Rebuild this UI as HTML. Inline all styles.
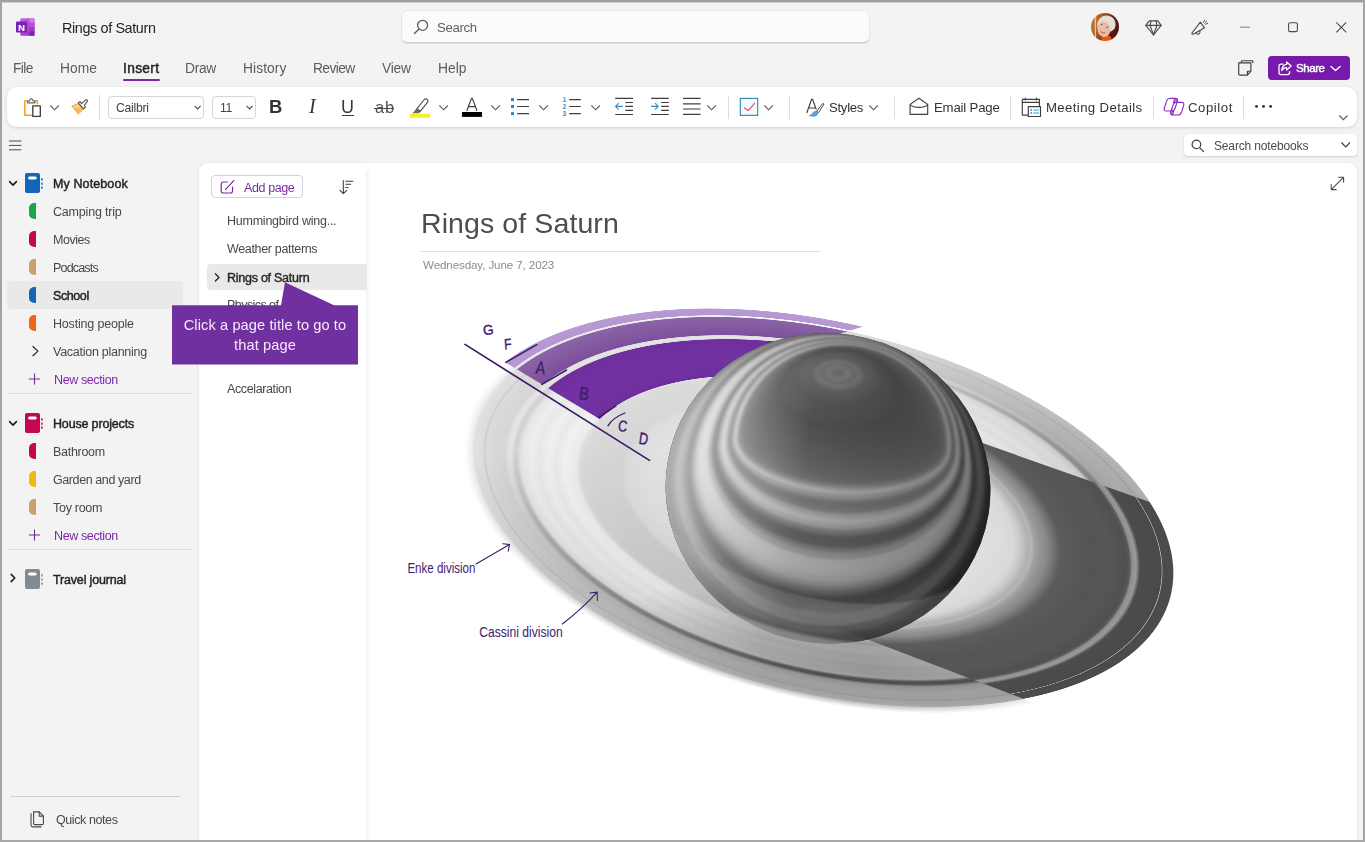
<!DOCTYPE html>
<html lang="en"><head><meta charset="utf-8"><title>Rings of Saturn - OneNote</title>
<style>
html,body{margin:0;padding:0;background:#f3f3f3;}
body{width:1365px;height:842px;overflow:hidden;font-family:"Liberation Sans",Arial,sans-serif;}
#app{position:relative;width:1365px;height:842px;background:#f3f3f3;overflow:hidden;}
.abs{position:absolute;}
.t{will-change:transform;position:absolute;white-space:pre;line-height:1;font-family:"Liberation Sans",Arial,sans-serif;}
.frame-t{z-index:50;left:0;top:0;width:1365px;height:2px;background:#9e9e9e;}
.frame-t2{z-index:50;left:0;top:2px;width:1365px;height:1px;background:#cfcfcf;}
.frame-l{z-index:50;left:0;top:0;width:2px;height:842px;background:#a3a3a3;}
.frame-r{z-index:50;left:1363px;top:0;width:2px;height:842px;background:#a3a3a3;}
.frame-b{z-index:50;left:0;top:840px;width:1365px;height:2px;background:#a8a8a8;}
.searchbox{left:402px;top:11px;width:467px;height:31px;background:#fbfbfb;border-radius:5px;box-shadow:0 0 0 1px rgba(0,0,0,.045),0 1.5px 1px rgba(0,0,0,.10);}
.tabline{left:123px;top:78.5px;width:36.6px;height:2.6px;background:#7a2aa8;border-radius:1.3px;}
.sharebtn{left:1268px;top:56px;width:82px;height:24px;background:#7719aa;border-radius:4px;}
.ribbon{left:7px;top:87px;width:1350px;height:40px;background:#fff;border-radius:9px;box-shadow:0 1px 3px rgba(0,0,0,.13),0 0 1px rgba(0,0,0,.10);}
.combo{background:#fff;border:1px solid #d6d6d6;border-radius:4px;box-sizing:border-box;}
.sep{width:1px;background:#dcdcdc;top:96px;height:23px;}
.nbsearch{left:1184px;top:134px;width:173px;height:22px;background:#fff;border-radius:4px;box-shadow:0 1px 2px rgba(0,0,0,.14),0 0 1px rgba(0,0,0,.10);}
.hl{background:#e9e9e9;border-radius:4px;}
.divider{height:1px;background:#dedede;}
.pagelist{left:199px;top:163px;width:168px;height:679px;background:#fff;border-radius:9px 0 0 0;box-shadow:-1px 0 3px rgba(0,0,0,.06);}
.content{left:367px;top:163px;width:990px;height:679px;background:#fff;border-radius:0 9px 0 0;box-shadow:1px 0 2px rgba(0,0,0,.03);}
.plshadow{left:366px;top:170px;width:5px;height:672px;background:linear-gradient(90deg,rgba(0,0,0,.05),rgba(0,0,0,0));}
.addbtn{left:211.4px;top:175.4px;width:91.2px;height:23px;border:1px solid #d8cfe0;border-radius:4px;box-sizing:border-box;background:#fff;}
.tab{width:6.6px;height:15.4px;border-radius:5.5px 0 0 5.5px / 5px 0 0 5px;}
svg{position:absolute;overflow:visible;}
.callout-text{will-change:transform;position:absolute;left:172px;top:315.6px;width:186px;text-align:center;color:#fbeaff;font-family:"Liberation Sans",Arial,sans-serif;font-size:14.6px;line-height:19.6px;letter-spacing:0.1px;white-space:pre;}

</style></head>
<body>
<div id="app">
<!-- window frame -->
<div class="abs frame-t"></div><div class="abs frame-t2"></div>
<div class="abs frame-l"></div><div class="abs frame-r"></div><div class="abs frame-b"></div>

<!-- title bar -->
<svg style="left:16px;top:18px" width="19" height="18" viewBox="0 0 19 18">
  <defs><linearGradient id="on1" x1="0" y1="0" x2="1" y2="1"><stop offset="0" stop-color="#c96ce0"/><stop offset="1" stop-color="#8a2bc0"/></linearGradient></defs>
  <rect x="4.2" y="0.2" width="14.3" height="17.6" rx="1.2" fill="url(#on1)"/>
  <rect x="13.6" y="0.2" width="4.9" height="4.6" fill="#d77be8"/>
  <rect x="13.6" y="4.8" width="4.9" height="4.3" fill="#b44fd6"/>
  <rect x="13.6" y="9.1" width="4.9" height="4.3" fill="#9a3cc6"/>
  <rect x="13.6" y="13.4" width="4.9" height="4.4" fill="#7f25b0"/>
  <rect x="0" y="3.6" width="11" height="11" rx="1.1" fill="#7a1fb3"/>
  <text x="5.5" y="12.6" text-anchor="middle" font-family="Liberation Sans, Arial, sans-serif" font-weight="700" font-size="9.6" fill="#fff">N</text>
</svg>
<div class="abs searchbox"></div>
<svg style="left:413px;top:19px" width="17" height="16" viewBox="0 0 17 16" fill="none" stroke="#5a5a5a" stroke-width="1.3" stroke-linecap="round">
  <circle cx="9.6" cy="6.3" r="5"/><path d="M6 10 L1.4 14.5"/>
</svg>
<!-- avatar -->
<svg style="left:1091px;top:13px" width="28" height="28" viewBox="0 0 28 28">
  <defs>
    <clipPath id="avc"><circle cx="14" cy="14" r="14"/></clipPath>
    <linearGradient id="avbg" x1="0" y1="0" x2="1" y2="0.25"><stop offset="0" stop-color="#c78a50"/><stop offset=".3" stop-color="#b8662e"/><stop offset=".62" stop-color="#8a3a20"/><stop offset=".8" stop-color="#5e1c16"/><stop offset="1" stop-color="#4e1612"/></linearGradient>
    <filter id="avb" x="-10%" y="-10%" width="120%" height="120%"><feGaussianBlur stdDeviation="0.55"/></filter>
  </defs>
  <g clip-path="url(#avc)"><g filter="url(#avb)">
    <rect x="-2" y="-2" width="32" height="32" fill="url(#avbg)"/>
    <path d="M3.6 0 L5.2 0 L5 28 L4 28 Z" fill="#f2c684"/>
    <path d="M16 22 L30 18 L30 30 L14 30 Z" fill="#5a1812"/>
    <path d="M11 23.4 Q15 21.4 19.6 23.2 L21 29 H10.5 Z" fill="#f0560f"/>
    <path d="M6.4 14 C5.6 6 11.4 2 16.2 2.6 C22.4 3 25.6 8.6 24.4 13.6 C23.8 16.4 21.6 18 19.8 18.4 L8 18 Z" fill="#e2ddd0"/>
    <ellipse cx="12.8" cy="16.4" rx="6.4" ry="7.6" transform="rotate(-14 12.8 16.4)" fill="#e9bba8"/>
    <path d="M6.6 13 C8 8.4 12.4 6.4 17 8.6 C19.6 10 20.6 13 20.2 17.6 C22.6 15.6 24.2 12 23 8.4 C21 3.4 15 1.8 10.6 4.4 C7.4 6.6 6 9.6 6.6 13 Z" fill="#e6e1d4"/>
    <path d="M9.6 18.6 Q11.6 20.6 14.2 19.6" stroke="#b4605a" stroke-width="1" fill="none"/>
    <circle cx="10.6" cy="11.4" r=".7" fill="#5a3a30"/><circle cx="16.2" cy="14.2" r=".7" fill="#5a3a30"/>
  </g></g>
</svg>
<!-- diamond -->
<svg style="left:1144.5px;top:19.5px" width="17" height="16" viewBox="0 0 17 16" fill="none" stroke="#4d4d4d" stroke-width="1.15" stroke-linejoin="round" stroke-linecap="round">
  <path d="M4.2 0.8 H12.8 L16.2 5.3 L8.5 15 L0.8 5.3 Z"/><path d="M0.8 5.3 H16.2"/><path d="M6 0.8 L5 5.3 L8.5 15 L12 5.3 L11 0.8"/>
</svg>
<!-- megaphone -->
<svg style="left:1190.5px;top:18.5px" width="18" height="17" viewBox="0 0 18 17" fill="none" stroke="#4d4d4d" stroke-width="1.15" stroke-linejoin="round" stroke-linecap="round">
  <path d="M9.3 3.2 L13.6 8.8 L2.2 15.2 Q0.6 15.6 1 14 Z"/>
  <path d="M5.2 13.5 Q6 16 8.4 14.8 Q9.6 13.6 8.7 11.6"/>
  <path d="M12.4 3.2 L13.5 1.4 M14.6 5.2 L16.6 4.4 M13.8 3.9 L15.6 2.2" stroke-width="1"/>
</svg>
<!-- window controls -->
<svg style="left:1240px;top:22px" width="110" height="12" viewBox="0 0 110 12" fill="none" stroke="#4a4a4a" stroke-width="1.1">
  <path d="M0 5.2 H10" stroke="#8a8a8a"/>
  <rect x="48.6" y="0.8" width="8.8" height="8.8" rx="1.4"/>
  <path d="M96.3 0.3 L106.3 10.3 M106.3 0.3 L96.3 10.3"/>
</svg>

<!-- menu row -->
<div class="abs tabline"></div>
<svg style="left:1237.5px;top:59.5px" width="16" height="16" viewBox="0 0 16 16" fill="none" stroke="#3d3d3d" stroke-width="1.15" stroke-linejoin="round">
  <path d="M3.4 0.7 H14.8 V3"/><path d="M3.4 0.7 V2.6"/>
  <path d="M0.7 2.9 H12.9 V11.2 L9.4 15.1 H2 Q0.7 15.1 0.7 13.8 Z"/>
  <path d="M12.9 11.2 H9.4 V15.1"/>
</svg>
<div class="abs sharebtn"></div>
<svg style="left:1277.5px;top:61px" width="64" height="15" viewBox="0 0 64 15" fill="none" stroke="#fff" stroke-width="1.3" stroke-linecap="round" stroke-linejoin="round">
  <path d="M5.2 3.1 H3 Q1 3.1 1 5.1 V11.6 Q1 13.6 3 13.6 H9.6 Q11.6 13.6 11.6 11.6 V10.6"/>
  <path d="M8.6 0.9 L13.2 5 L8.6 9.1 V6.7 Q5.2 6.6 3.8 9.6 Q4 4 8.6 3.4 Z"/>
  <path d="M53 5.4 L57.5 9.6 L62 5.4" stroke-width="1.4"/>
</svg>

<!-- ribbon -->
<div class="abs ribbon"></div>
<!-- paste -->
<svg style="left:23px;top:97px" width="20" height="21" viewBox="0 0 20 21" fill="none" stroke-linejoin="round">
  <path d="M9 18.2 H1.8 V3.8 H4.4 M12 3.8 H14.4 V7.6" stroke="#f0a332" stroke-width="1.5"/>
  <path d="M4.6 5.9 V3.9 H6.6 Q6.8 1.6 8.3 1.6 Q9.8 1.6 10 3.9 H12 V5.9 Z" stroke="#6b6b6b" stroke-width="1.1" fill="#fff"/>
  <rect x="9.8" y="8.8" width="7.5" height="10.6" stroke="#3a3a3a" stroke-width="1.3" fill="#fff"/>
</svg>
<svg style="left:50px;top:104.6px" width="10" height="6" viewBox="0 0 10 6" fill="none" stroke="#5a5a5a" stroke-width="1.1"><path d="M0.4 0.5 L4.6 4.8 L8.8 0.5"/></svg>
<!-- format painter -->
<svg style="left:71px;top:98.5px" width="18" height="16" viewBox="0 0 18 16" fill="none" stroke-linejoin="round">
  <path d="M0.8 7.1 L7.6 4.6 L11.9 10.6 L7.3 15.1 Z" fill="#fbd08a" stroke="#f0a332" stroke-width="1"/>
  <path d="M3 9.4 L10 8 L11.9 10.6 L7.3 15.1 Z" fill="#f6b95a" stroke="none"/>
  <path d="M7.2 3.9 L8.9 2.6 L10.6 4.6 L14.6 0.9 Q16 0.5 16.7 1.9 L13.3 6.3 L14.4 8 L12.6 9.9 Z" fill="#fff" stroke="#4f4f4f" stroke-width="1.1"/>
</svg>
<div class="abs sep" style="left:99px;top:95px;height:25px"></div>
<!-- font combos -->
<div class="abs combo" style="left:108px;top:95.6px;width:95.6px;height:23px"></div>
<svg style="left:194px;top:104.6px" width="8" height="6" viewBox="0 0 8 6" fill="none" stroke="#4a4a4a" stroke-width="1.1"><path d="M0.6 0.8 L3.6 3.9 L6.6 0.8"/></svg>
<div class="abs combo" style="left:212.4px;top:95.6px;width:43.4px;height:23px"></div>
<svg style="left:246px;top:104.6px" width="8" height="6" viewBox="0 0 8 6" fill="none" stroke="#4a4a4a" stroke-width="1.1"><path d="M0.6 0.8 L3.6 3.9 L6.6 0.8"/></svg>
<!-- underline for U, strike for ab -->
<div class="abs" style="left:342px;top:114.5px;width:12px;height:1.2px;background:#3a3a3a"></div>
<div class="abs" style="left:374.2px;top:107.9px;width:19.8px;height:1.1px;background:#4a4a4a"></div>
<!-- highlighter -->
<svg style="left:409px;top:97px" width="23" height="22" viewBox="0 0 23 22" fill="none" stroke-linejoin="round">
  <rect x="1" y="16.8" width="20" height="3.9" fill="#f2f21c" stroke="none"/>
  <path d="M8 11.6 L15.3 2.5 Q16.6 1.2 18.2 2.4 Q19.7 3.7 18.6 5.2 L11.3 14.3 Z" stroke="#4f4f4f" stroke-width="1.15" fill="#fff"/>
  <path d="M7.4 11.2 L11.8 14.8 L9.6 16.2 H3.2 L5.4 14.2 Z" fill="#6a6a6a" stroke="none"/>
</svg>
<svg style="left:438.6px;top:104.6px" width="10" height="6" viewBox="0 0 10 6" fill="none" stroke="#5a5a5a" stroke-width="1.1"><path d="M0.4 0.5 L4.6 4.8 L8.8 0.5"/></svg>
<!-- font color -->
<svg style="left:461px;top:97px" width="22" height="21" viewBox="0 0 22 21" fill="none">
  <rect x="1" y="15" width="20" height="4.9" fill="#000"/>
  <path d="M5.8 13.8 L10.5 1.4 H11.3 L16 13.8 M7.5 9.6 H14.3" stroke="#3a3a3a" stroke-width="1.15" stroke-linejoin="round"/>
</svg>
<svg style="left:490.6px;top:104.6px" width="10" height="6" viewBox="0 0 10 6" fill="none" stroke="#5a5a5a" stroke-width="1.1"><path d="M0.4 0.5 L4.6 4.8 L8.8 0.5"/></svg>
<!-- bullets -->
<svg style="left:510px;top:97px" width="21" height="19" viewBox="0 0 21 19" fill="none">
  <g fill="#2f86b4"><rect x="1" y="1.1" width="3" height="3"/><rect x="1" y="8" width="3" height="3"/><rect x="1" y="15.1" width="3" height="3"/></g>
  <path d="M7.1 2.6 H19 M7.1 9.5 H19 M7.1 16.6 H19" stroke="#3f3f3f" stroke-width="1.15"/>
</svg>
<svg style="left:538.6px;top:104.6px" width="10" height="6" viewBox="0 0 10 6" fill="none" stroke="#5a5a5a" stroke-width="1.1"><path d="M0.4 0.5 L4.6 4.8 L8.8 0.5"/></svg>
<!-- numbering -->
<svg style="left:561px;top:96px" width="21" height="21" viewBox="0 0 21 21" fill="none">
  <g font-family="Liberation Sans, Arial, sans-serif" font-size="6.6" fill="#3b93c4" font-weight="700"><text x="1.6" y="6">1</text><text x="1.6" y="13">2</text><text x="1.6" y="20">3</text></g>
  <path d="M8.2 3.6 H19.8 M8.2 10.5 H19.8 M8.2 17.6 H19.8" stroke="#3f3f3f" stroke-width="1.15"/>
</svg>
<svg style="left:590.6px;top:104.6px" width="10" height="6" viewBox="0 0 10 6" fill="none" stroke="#5a5a5a" stroke-width="1.1"><path d="M0.4 0.5 L4.6 4.8 L8.8 0.5"/></svg>
<!-- outdent -->
<svg style="left:614px;top:97px" width="20" height="19" viewBox="0 0 20 19" fill="none">
  <path d="M1.2 1.4 H19 M11.3 5.5 H19 M11.3 9.4 H19 M11.3 13.4 H19 M1.2 17.5 H19" stroke="#3f3f3f" stroke-width="1.15"/>
  <path d="M8.8 9.4 H1.8 M4.8 6.2 L1.6 9.4 L4.8 12.6" stroke="#2f8fc4" stroke-width="1.2" stroke-linejoin="round"/>
</svg>
<!-- indent -->
<svg style="left:650px;top:97px" width="20" height="19" viewBox="0 0 20 19" fill="none">
  <path d="M1.1 1.4 H18.8 M11.2 5.5 H18.8 M11.2 9.4 H18.8 M11.2 13.4 H18.8 M1.1 17.5 H18.8" stroke="#3f3f3f" stroke-width="1.15"/>
  <path d="M1 9.4 H8 M5 6.2 L8.2 9.4 L5 12.6" stroke="#2f8fc4" stroke-width="1.2" stroke-linejoin="round"/>
</svg>
<!-- align -->
<svg style="left:682px;top:97px" width="20" height="19" viewBox="0 0 20 19" fill="none">
  <path d="M1 1.4 H18.6 M1 6.9 H18.6 M1 12 H18.6 M1 17.4 H18.6" stroke="#3f3f3f" stroke-width="1.15"/>
</svg>
<svg style="left:706.6px;top:104.6px" width="10" height="6" viewBox="0 0 10 6" fill="none" stroke="#5a5a5a" stroke-width="1.1"><path d="M0.4 0.5 L4.6 4.8 L8.8 0.5"/></svg>
<div class="abs sep" style="left:728px"></div>
<!-- todo tag -->
<svg style="left:739px;top:97px" width="20" height="20" viewBox="0 0 20 20" fill="none">
  <rect x="1.3" y="1.4" width="17.4" height="17" fill="#f3fafd" stroke="#3a8fb7" stroke-width="1.2"/>
  <path d="M5.4 11 L9.3 13.5 L15.6 6.3" stroke="#e8505b" stroke-width="1.2" stroke-linejoin="round" stroke-linecap="round"/>
</svg>
<svg style="left:764px;top:104.6px" width="10" height="6" viewBox="0 0 10 6" fill="none" stroke="#5a5a5a" stroke-width="1.1"><path d="M0.4 0.5 L4.6 4.8 L8.8 0.5"/></svg>
<div class="abs sep" style="left:789px"></div>
<!-- styles -->
<svg style="left:805px;top:97px" width="21" height="21" viewBox="0 0 21 21" fill="none" stroke-linejoin="round">
  <path d="M1.8 16 L6.6 2.2 H7.6 L11.2 12.4 M3.6 11 H10.4" stroke="#3f3f3f" stroke-width="1.15"/>
  <path d="M11.6 14.2 L17.4 6.8 Q18.4 6 19 7 L13.6 15.6 Z" fill="#fff" stroke="#4f4f4f" stroke-width="1"/>
  <path d="M4.2 18.6 Q7 18 8.4 15.2 Q10.2 13.6 12 14.6 Q13.6 16.2 12 18 Q9.6 20.4 4.2 18.6 Z" fill="#5a9fd6" stroke="#3f86c4" stroke-width=".6"/>
</svg>
<svg style="left:868.6px;top:104.6px" width="10" height="6" viewBox="0 0 10 6" fill="none" stroke="#5a5a5a" stroke-width="1.1"><path d="M0.4 0.5 L4.6 4.8 L8.8 0.5"/></svg>
<div class="abs sep" style="left:894px"></div>
<!-- email -->
<svg style="left:909px;top:97px" width="20" height="19" viewBox="0 0 20 19" fill="none" stroke="#3f3f3f" stroke-width="1.15" stroke-linejoin="round">
  <path d="M1.1 7.4 L10 1.3 L18.7 7.4 V17.3 H1.1 Z"/>
  <path d="M1.1 7.6 Q4 10.4 10 10.4 Q16 10.4 18.7 7.6"/>
</svg>
<div class="abs sep" style="left:1010px"></div>
<!-- meeting details -->
<svg style="left:1021px;top:97px" width="21" height="21" viewBox="0 0 21 21" fill="none" stroke-linejoin="round">
  <path d="M7.4 18.1 H1.3 V2.4 H18.4 V9.6 M1.3 5.4 H18.4 M4.4 0.8 V3.4 M15.4 0.8 V3.4" stroke="#3f3f3f" stroke-width="1.15"/>
  <rect x="7.3" y="9.6" width="12.2" height="9.9" fill="#fff" stroke="#3f3f3f" stroke-width="1.15"/>
  <path d="M9.4 13 H11 M9.4 16 H11" stroke="#2f86b4" stroke-width="1.6"/>
  <path d="M12.2 13 H18 M12.2 16 H18" stroke="#3aa0d8" stroke-width="1.1"/>
</svg>
<div class="abs sep" style="left:1153px"></div>
<!-- copilot -->
<svg style="left:1163px;top:97px" width="22" height="20" viewBox="0 0 22 20" fill="none" stroke="#8a2fc0" stroke-width="1.15" stroke-linejoin="round">
  <path d="M6.6 1.3 H12.4 Q15.2 1.5 14.2 4.6 L12.2 11 Q11.2 13.9 8.4 14 H3 Q0.4 13.8 1.4 10.8 L3.6 4.2 Q4.4 1.5 6.6 1.3 Z"/>
  <path d="M13.4 5.3 H18.8 Q21.6 5.5 20.6 8.6 L18.6 15 Q17.6 17.9 14.8 18 H9.4 Q6.8 17.8 7.8 14.8 L10 8.2 Q10.8 5.5 13.4 5.3 Z"/>
  <path d="M10.6 5.6 L11.6 1.5 Q14.6 1.4 14.2 4.6 L13.9 5.4 Q11.6 5.2 10.6 5.6 Z M7.8 14 H10.6 L9.6 17.9 Q7 17.6 7.8 14 Z" fill="#c58be8"/>
</svg>
<div class="abs sep" style="left:1243px"></div>
<svg style="left:1254px;top:104px" width="20" height="5" viewBox="0 0 20 5"><g fill="#2f2f2f"><circle cx="2.5" cy="2.4" r="1.45"/><circle cx="9.5" cy="2.4" r="1.45"/><circle cx="16.6" cy="2.4" r="1.45"/></g></svg>
<svg style="left:1338.6px;top:114.6px" width="10" height="6" viewBox="0 0 10 6" fill="none" stroke="#5a5a5a" stroke-width="1.1"><path d="M0.4 0.5 L4.4 4.6 L8.4 0.5"/></svg>

<!-- row under ribbon -->
<svg style="left:9px;top:139.5px" width="13" height="11" viewBox="0 0 13 11" fill="none" stroke="#4a4a4a" stroke-width="1"><path d="M0 1 H12.4 M0 5.4 H12.4 M0 9.8 H12.4"/></svg>
<div class="abs nbsearch"></div>
<svg style="left:1190.5px;top:138.5px" width="14" height="14" viewBox="0 0 14 14" fill="none" stroke="#3f3f3f" stroke-width="1.2" stroke-linecap="round"><circle cx="5.4" cy="5.4" r="4.3"/><path d="M8.6 8.6 L12.6 12.6"/></svg>
<svg style="left:1340.6px;top:142.4px" width="10" height="6" viewBox="0 0 10 6" fill="none" stroke="#3f3f3f" stroke-width="1.15"><path d="M0.4 0.5 L4.7 4.9 L9 0.5"/></svg>

<!-- sidebar -->
<div class="abs hl" style="left:7px;top:281.4px;width:176px;height:27.4px"></div>
<!-- notebook: My Notebook -->
<svg style="left:8px;top:172px" width="36" height="22" viewBox="0 0 36 22" fill="none">
  <path d="M1.6 9.6 L5 13.1 L8.4 9.6" stroke="#1f1f1f" stroke-width="1.6" stroke-linecap="round" stroke-linejoin="round"/>
  <rect x="17" y="0.9" width="15" height="20" rx="1.9" fill="#1266b8"/>
  <rect x="20.1" y="4.4" width="8.6" height="3.2" rx="1.5" fill="#fff"/>
  <path d="M33.9 6.3 V8.5 M33.9 10.5 V12.7 M33.9 14.5 V16.7" stroke="#1266b8" stroke-width="1.5"/>
</svg>
<div class="abs tab" style="left:29.4px;top:203.3px;background:#13a84a"></div>
<div class="abs tab" style="left:29.4px;top:231.3px;background:#c2094f"></div>
<div class="abs tab" style="left:29.4px;top:259.3px;background:#c9a06e"></div>
<div class="abs tab" style="left:29.4px;top:287.3px;background:#1266b8"></div>
<div class="abs tab" style="left:29.4px;top:315.3px;background:#f0650f"></div>
<svg style="left:31px;top:345px" width="9" height="12" viewBox="0 0 9 12" fill="none" stroke="#2a2a2a" stroke-width="1.25" stroke-linecap="round" stroke-linejoin="round"><path d="M2 1.5 L6.9 6.1 L2 10.7"/></svg>
<svg style="left:28px;top:373px" width="13" height="12" viewBox="0 0 13 12" fill="none" stroke="#6b2fa0" stroke-width="1.1"><path d="M1 6 H12 M6.5 0.6 V11.4"/></svg>
<div class="abs divider" style="left:8px;top:393.4px;width:184px"></div>
<!-- notebook: House projects -->
<svg style="left:8px;top:412px" width="36" height="22" viewBox="0 0 36 22" fill="none">
  <path d="M1.6 9.6 L5 13.1 L8.4 9.6" stroke="#1f1f1f" stroke-width="1.6" stroke-linecap="round" stroke-linejoin="round"/>
  <rect x="17" y="0.9" width="15" height="20" rx="1.9" fill="#c2094f"/>
  <rect x="20.1" y="4.4" width="8.6" height="3.2" rx="1.5" fill="#fff"/>
  <path d="M33.9 6.3 V8.5 M33.9 10.5 V12.7 M33.9 14.5 V16.7" stroke="#c2094f" stroke-width="1.5"/>
</svg>
<div class="abs tab" style="left:29.4px;top:443.3px;background:#c2094f"></div>
<div class="abs tab" style="left:29.4px;top:471.3px;background:#f2b80f"></div>
<div class="abs tab" style="left:29.4px;top:499.3px;background:#c9a06e"></div>
<svg style="left:28px;top:529px" width="13" height="12" viewBox="0 0 13 12" fill="none" stroke="#6b2fa0" stroke-width="1.1"><path d="M1 6 H12 M6.5 0.6 V11.4"/></svg>
<div class="abs divider" style="left:8px;top:549px;width:184px"></div>
<!-- notebook: Travel journal -->
<svg style="left:8px;top:568px" width="36" height="22" viewBox="0 0 36 22" fill="none">
  <path d="M3.2 6.4 L6.8 10 L3.2 13.6" stroke="#1f1f1f" stroke-width="1.6" stroke-linecap="round" stroke-linejoin="round"/>
  <rect x="17" y="0.9" width="15" height="20" rx="1.9" fill="#7f8c92"/>
  <rect x="20.1" y="4.4" width="8.6" height="3.2" rx="1.5" fill="#fff"/>
  <path d="M33.9 6.3 V8.5 M33.9 10.5 V12.7 M33.9 14.5 V16.7" stroke="#7f8c92" stroke-width="1.5"/>
</svg>
<div class="abs divider" style="left:10px;top:796px;width:170px;background:#cfcfcf"></div>
<svg style="left:29.5px;top:810.5px" width="15" height="17" viewBox="0 0 15 17" fill="none" stroke="#4a4a4a" stroke-width="1.1" stroke-linejoin="round" stroke-linecap="round">
  <path d="M3.6 0.9 H9.2 L13.4 5.1 V12.4 Q13.4 13.6 12.2 13.6 H4.8 Q3.6 13.6 3.6 12.4 Z"/>
  <path d="M9.2 0.9 V5.1 H13.4"/>
  <path d="M1 2.6 V14 Q1 15.9 2.9 15.9 H11"/>
</svg>

<!-- page list & content panels -->
<div class="abs pagelist"></div>
<div class="abs content"></div>
<div class="abs plshadow"></div>
<div class="abs addbtn"></div>
<svg style="left:220px;top:179px" width="16" height="16" viewBox="0 0 16 16" fill="none" stroke="#7a2aa8" stroke-width="1.2" stroke-linecap="round" stroke-linejoin="round">
  <path d="M7.4 3 H3.4 Q1.2 3 1.2 5.2 V11.8 Q1.2 14 3.4 14 H10.4 Q12.6 14 12.6 11.8 V8"/>
  <path d="M5.6 10.4 L13.8 1.6"/>
</svg>
<svg style="left:338px;top:179px" width="17" height="16" viewBox="0 0 17 16" fill="none" stroke="#3a3a3a" stroke-width="1.05" stroke-linecap="round" stroke-linejoin="round">
  <path d="M5.3 1.4 V14.5 M2 11.3 L5.3 14.7 L8.8 11.3"/>
  <path d="M7.8 2.2 H14.8 M7.8 5.3 H12.8 M7.8 8.4 H10"/>
</svg>
<div class="abs hl" style="left:207px;top:264px;width:160px;height:25.6px;border-radius:4px 0 0 4px"></div>
<svg style="left:213px;top:272px" width="9" height="11" viewBox="0 0 9 11" fill="none" stroke="#2a2a2a" stroke-width="1.35" stroke-linecap="round" stroke-linejoin="round"><path d="M2.4 1.8 L6 5.4 L2.4 9"/></svg>
<!-- title underline -->
<div class="abs" style="left:421px;top:251px;width:400px;height:1px;background:#e2e2e2"></div>
<!-- expand -->
<svg style="left:1330px;top:176px" width="15" height="15" viewBox="0 0 15 15" fill="none" stroke="#4a4a4a" stroke-width="1.05" stroke-linecap="round" stroke-linejoin="round">
  <path d="M1.4 13.4 L13.4 1.4 M8.6 1.2 H13.6 V6.2 M1.2 8.6 V13.6 H6.2"/>
</svg>

<svg style="left:0;top:0" width="1365" height="842" viewBox="0 0 1365 842">
<defs>
<radialGradient id="rgL" gradientUnits="userSpaceOnUse" cx="0" cy="0" r="400.0" fx="-11.83" fy="-4.15"><stop offset="0.0000" stop-color="#e4e4e4" stop-opacity="1"/><stop offset="0.4325" stop-color="#e4e4e4" stop-opacity="1"/><stop offset="0.4913" stop-color="#dedede" stop-opacity="1"/><stop offset="0.5065" stop-color="#d8d8d8" stop-opacity="1"/><stop offset="0.5875" stop-color="#dadada" stop-opacity="1"/><stop offset="0.6115" stop-color="#dcdcdc" stop-opacity="1"/><stop offset="0.6250" stop-color="#ececec" stop-opacity="1"/><stop offset="0.6555" stop-color="#f1f1f1" stop-opacity="1"/><stop offset="0.6758" stop-color="#e9e9e9" stop-opacity="1"/><stop offset="0.6963" stop-color="#f0f0f0" stop-opacity="1"/><stop offset="0.7215" stop-color="#e8e8e8" stop-opacity="1"/><stop offset="0.7418" stop-color="#eeeeee" stop-opacity="1"/><stop offset="0.7672" stop-color="#e6e6e6" stop-opacity="1"/><stop offset="0.7797" stop-color="#d2d2d2" stop-opacity="1"/><stop offset="0.7875" stop-color="#d4d4d4" stop-opacity="1"/><stop offset="0.7925" stop-color="#e4e4e4" stop-opacity="1"/><stop offset="0.8028" stop-color="#e2e2e2" stop-opacity="1"/><stop offset="0.8103" stop-color="#d6d6d6" stop-opacity="1"/><stop offset="0.8462" stop-color="#d9d9d9" stop-opacity="1"/><stop offset="0.8592" stop-color="#dcdcdc" stop-opacity="1"/><stop offset="0.8625" stop-color="#d0d0d0" stop-opacity="1"/><stop offset="0.8655" stop-color="#d1d1d1" stop-opacity="1"/><stop offset="0.8685" stop-color="#dddddd" stop-opacity="1"/><stop offset="0.8800" stop-color="#dedede" stop-opacity="1"/><stop offset="0.8915" stop-color="#e0e0e0" stop-opacity="1"/><stop offset="0.8950" stop-color="#e0e0e0" stop-opacity="0"/></radialGradient>
<radialGradient id="rgC" gradientUnits="userSpaceOnUse" cx="0" cy="0" r="400.0" fx="-11.83" fy="-4.15"><stop offset="0.0000" stop-color="#000" stop-opacity="0"/><stop offset="0.7700" stop-color="#000" stop-opacity="0"/><stop offset="0.7812" stop-color="#000" stop-opacity="0.45"/><stop offset="0.7913" stop-color="#000" stop-opacity="0.6"/><stop offset="0.7987" stop-color="#000" stop-opacity="0.4"/><stop offset="0.8087" stop-color="#000" stop-opacity="0"/><stop offset="1.0000" stop-color="#000" stop-opacity="0"/></radialGradient>
<radialGradient id="rgH" gradientUnits="userSpaceOnUse" cx="0" cy="0" r="400.0" fx="-11.83" fy="-4.15"><stop offset="0.0000" stop-color="#dedede" stop-opacity="0"/><stop offset="0.8725" stop-color="#dedede" stop-opacity="0"/><stop offset="0.8800" stop-color="#dedede" stop-opacity="1"/><stop offset="0.8925" stop-color="#e2e2e2" stop-opacity="0.85"/><stop offset="0.9025" stop-color="#e8e8e8" stop-opacity="0.6"/><stop offset="0.9125" stop-color="#f0f0f0" stop-opacity="0.3"/><stop offset="0.9250" stop-color="#ffffff" stop-opacity="0"/></radialGradient>
<radialGradient id="rgHD" gradientUnits="userSpaceOnUse" cx="0" cy="0" r="400.0" fx="-11.83" fy="-4.15"><stop offset="0.0000" stop-color="#000" stop-opacity="0"/><stop offset="0.8725" stop-color="#000" stop-opacity="0"/><stop offset="0.8800" stop-color="#000" stop-opacity="0.25"/><stop offset="0.9000" stop-color="#000" stop-opacity="0.14"/><stop offset="0.9225" stop-color="#000" stop-opacity="0"/></radialGradient>
<radialGradient id="rgB" gradientUnits="userSpaceOnUse" cx="0" cy="0" r="400.0" fx="-11.83" fy="-4.15"><stop offset="0.0000" stop-color="#000" stop-opacity="0.05"/><stop offset="0.6000" stop-color="#000" stop-opacity="0.08"/><stop offset="0.6200" stop-color="#000" stop-opacity="0.3"/><stop offset="0.7500" stop-color="#000" stop-opacity="0.26"/><stop offset="0.7800" stop-color="#000" stop-opacity="0.15"/><stop offset="0.7950" stop-color="#000" stop-opacity="0"/><stop offset="1.0000" stop-color="#000" stop-opacity="0"/></radialGradient>
<radialGradient id="rgD" gradientUnits="userSpaceOnUse" cx="0" cy="0" r="400.0" fx="-11.83" fy="-4.15"><stop offset="0.0000" stop-color="#000" stop-opacity="0.1"/><stop offset="0.4913" stop-color="#000" stop-opacity="0.1"/><stop offset="0.5065" stop-color="#000" stop-opacity="0.16"/><stop offset="0.6075" stop-color="#000" stop-opacity="0.18"/><stop offset="0.6250" stop-color="#000" stop-opacity="0.08"/><stop offset="0.7318" stop-color="#000" stop-opacity="0.12"/><stop offset="0.7672" stop-color="#000" stop-opacity="0.16"/><stop offset="0.7797" stop-color="#000" stop-opacity="0.2"/><stop offset="0.7900" stop-color="#000" stop-opacity="0.1"/><stop offset="0.8003" stop-color="#000" stop-opacity="0.12"/><stop offset="0.8078" stop-color="#000" stop-opacity="0.3"/><stop offset="0.8335" stop-color="#000" stop-opacity="0.26"/><stop offset="0.8592" stop-color="#000" stop-opacity="0.28"/><stop offset="0.8915" stop-color="#000" stop-opacity="0.25"/><stop offset="0.8950" stop-color="#000" stop-opacity="0"/></radialGradient>
<radialGradient id="rgS" gradientUnits="userSpaceOnUse" cx="0" cy="0" r="400.0" fx="-11.83" fy="-4.15"><stop offset="0.0000" stop-color="#e0e0e0" stop-opacity="1"/><stop offset="0.4350" stop-color="#dedede" stop-opacity="1"/><stop offset="0.4650" stop-color="#dcdcdc" stop-opacity="1"/><stop offset="0.4950" stop-color="#d8d8d8" stop-opacity="1"/><stop offset="0.5100" stop-color="#cccccc" stop-opacity="1"/><stop offset="0.5225" stop-color="#bcbcbc" stop-opacity="1"/><stop offset="0.5325" stop-color="#b0b0b0" stop-opacity="1"/><stop offset="0.5400" stop-color="#b6b6b6" stop-opacity="1"/><stop offset="0.5500" stop-color="#a0a0a0" stop-opacity="1"/><stop offset="0.5675" stop-color="#909090" stop-opacity="1"/><stop offset="0.5775" stop-color="#8a8a8a" stop-opacity="1"/><stop offset="0.5900" stop-color="#7a7a7a" stop-opacity="1"/><stop offset="0.6050" stop-color="#666666" stop-opacity="1"/><stop offset="0.6135" stop-color="#5c5c5c" stop-opacity="1"/><stop offset="0.6505" stop-color="#585858" stop-opacity="1"/><stop offset="0.6935" stop-color="#545454" stop-opacity="1"/><stop offset="0.7318" stop-color="#575757" stop-opacity="1"/><stop offset="0.7772" stop-color="#505050" stop-opacity="1"/><stop offset="0.7850" stop-color="#5c5c5c" stop-opacity="1"/><stop offset="0.7900" stop-color="#8e8e8e" stop-opacity="1"/><stop offset="0.8003" stop-color="#9a9a9a" stop-opacity="1"/><stop offset="0.8065" stop-color="#6a6a6a" stop-opacity="1"/><stop offset="0.8103" stop-color="#4c4c4c" stop-opacity="1"/><stop offset="0.8592" stop-color="#4a4a4a" stop-opacity="1"/><stop offset="0.8630" stop-color="#4a4a4a" stop-opacity="1"/><stop offset="0.8647" stop-color="#b8b8b8" stop-opacity="1"/><stop offset="0.8668" stop-color="#4a4a4a" stop-opacity="1"/><stop offset="0.8915" stop-color="#4c4c4c" stop-opacity="1"/><stop offset="0.8940" stop-color="#ffffff" stop-opacity="1"/><stop offset="1.0000" stop-color="#ffffff" stop-opacity="1"/></radialGradient>
<radialGradient id="rgP" gradientUnits="userSpaceOnUse" cx="0" cy="0" r="400.0" fx="-11.83" fy="-4.15"><stop offset="0.0000" stop-color="#7030a0" stop-opacity="0"/><stop offset="0.6165" stop-color="#7030a0" stop-opacity="0"/><stop offset="0.6188" stop-color="#6c2c9a" stop-opacity="1"/><stop offset="0.6352" stop-color="#7030a0" stop-opacity="1"/><stop offset="0.7318" stop-color="#7232a2" stop-opacity="1"/><stop offset="0.7863" stop-color="#6e2e9c" stop-opacity="1"/><stop offset="0.7887" stop-color="#6e2e9c" stop-opacity="0"/><stop offset="0.8053" stop-color="#7c4f9e" stop-opacity="0"/><stop offset="0.8078" stop-color="#7c4f9e" stop-opacity="1"/><stop offset="0.8462" stop-color="#84599f" stop-opacity="1"/><stop offset="0.8900" stop-color="#8a63a8" stop-opacity="1"/><stop offset="0.8925" stop-color="#8a63a8" stop-opacity="0"/><stop offset="0.8982" stop-color="#b596d1" stop-opacity="0"/><stop offset="0.9003" stop-color="#b596d1" stop-opacity="1"/><stop offset="0.9297" stop-color="#b79bd3" stop-opacity="1"/><stop offset="0.9322" stop-color="#b79bd3" stop-opacity="0"/></radialGradient>
<linearGradient id="dmaskg" gradientUnits="userSpaceOnUse" x1="600" y1="430" x2="680" y2="760"><stop offset="0" stop-color="#000"/><stop offset="0.2" stop-color="#3a3a3a"/><stop offset="0.5" stop-color="#999"/><stop offset="0.85" stop-color="#fff"/></linearGradient>
<linearGradient id="dmaskg2" gradientUnits="userSpaceOnUse" x1="820" y1="0" x2="1120" y2="0"><stop offset="0" stop-color="#fff" stop-opacity="0"/><stop offset="1" stop-color="#fff" stop-opacity="0.5"/></linearGradient>
<radialGradient id="bmaskg"><stop offset="0" stop-color="#fff"/><stop offset="0.45" stop-color="#ccc"/><stop offset="0.8" stop-color="#444"/><stop offset="1" stop-color="#000"/></radialGradient>
<mask id="bmask" maskUnits="userSpaceOnUse" x="380" y="250" width="860" height="520"><ellipse cx="870" cy="668" rx="250" ry="60" transform="rotate(13.5 870 668)" fill="url(#bmaskg)"/></mask>
<linearGradient id="hmaskg" gradientUnits="userSpaceOnUse" x1="980" y1="420" x2="700" y2="640"><stop offset="0" stop-color="#000"/><stop offset="0.3" stop-color="#333"/><stop offset="0.7" stop-color="#fff"/></linearGradient>
<mask id="hmask" maskUnits="userSpaceOnUse" x="380" y="250" width="860" height="520"><rect x="380" y="250" width="860" height="520" fill="url(#hmaskg)"/></mask>
<mask id="dmask1" maskUnits="userSpaceOnUse" x="380" y="250" width="860" height="520"><rect x="380" y="250" width="860" height="520" fill="url(#dmaskg)"/></mask>
<mask id="dmask" maskUnits="userSpaceOnUse" x="380" y="250" width="860" height="520"><rect x="380" y="250" width="860" height="520" fill="url(#dmaskg)"/><rect x="380" y="250" width="860" height="520" fill="url(#dmaskg2)"/></mask>
<clipPath id="shclip"><path d="M900 414 L1215 525 L1215 780 L1066 715 L800 613.8 Z"/></clipPath>
<clipPath id="puclip"><path d="M470 341.2 L640 443.2 L830 450 L803.5 345 L903.5 314 L903.5 270 L470 270 Z"/></clipPath>
<clipPath id="frontclip"><path d="M560 447.6 L1080 572.4 L1080 760 L560 760 Z"/></clipPath>
<filter id="pblur" x="-5%" y="-5%" width="110%" height="110%"><feGaussianBlur stdDeviation="1.2"/></filter>
<filter id="rblur" x="-5%" y="-5%" width="110%" height="110%"><feGaussianBlur stdDeviation="0.55"/></filter>
<linearGradient id="plit" gradientUnits="userSpaceOnUse" x1="665.5" y1="455.4" x2="990.5" y2="521.4"><stop offset="0" stop-color="#000" stop-opacity="0"/><stop offset="0.06" stop-color="#000" stop-opacity="0.02"/><stop offset="0.25" stop-color="#000" stop-opacity="0.14"/><stop offset="0.5" stop-color="#000" stop-opacity="0.26"/><stop offset="0.75" stop-color="#000" stop-opacity="0.36"/><stop offset="1" stop-color="#000" stop-opacity="0.44"/></linearGradient>
<radialGradient id="plimb" gradientUnits="userSpaceOnUse" cx="808.0" cy="463.4" r="184.5"><stop offset="0" stop-color="#000" stop-opacity="0"/><stop offset="0.78" stop-color="#000" stop-opacity="0"/><stop offset="0.93" stop-color="#000" stop-opacity="0.10"/><stop offset="1" stop-color="#000" stop-opacity="0.24"/></radialGradient>
<linearGradient id="pwhite" gradientUnits="userSpaceOnUse" x1="665.5" y1="463.4" x2="990.5" y2="513.4"><stop offset="0" stop-color="#fff" stop-opacity="0.55"/><stop offset="0.08" stop-color="#fff" stop-opacity="0.45"/><stop offset="0.22" stop-color="#fff" stop-opacity="0.2"/><stop offset="0.42" stop-color="#fff" stop-opacity="0"/></linearGradient>
<clipPath id="pclip"><ellipse cx="828.0" cy="488.4" rx="162.5" ry="155.1" transform="rotate(9.0 828.0 488.4)"/></clipPath><clipPath id="pclip2"><ellipse cx="828.0" cy="488.4" rx="163.7" ry="156.29999999999998" transform="rotate(9.0 828.0 488.4)"/></clipPath>
<radialGradient id="rgM" gradientUnits="userSpaceOnUse" cx="0" cy="0" r="400.0" fx="-11.83" fy="-4.15"><stop offset="0.0000" stop-color="#000" stop-opacity="1"/><stop offset="0.4250" stop-color="#000" stop-opacity="1"/><stop offset="0.4400" stop-color="#2a2a2a" stop-opacity="1"/><stop offset="0.6035" stop-color="#383838" stop-opacity="1"/><stop offset="0.6200" stop-color="#a8a8a8" stop-opacity="1"/><stop offset="0.6683" stop-color="#c8c8c8" stop-opacity="1"/><stop offset="0.7318" stop-color="#fff" stop-opacity="1"/><stop offset="0.9862" stop-color="#fff" stop-opacity="1"/></radialGradient><mask id="fmask" maskUnits="userSpaceOnUse" x="380" y="250" width="860" height="520"><g clip-path="url(#frontclip)"><g transform="translate(824.72 512.29) rotate(13.5) scale(1 0.5079)"><circle cx="0" cy="0" r="400.0" fill="url(#rgM)" /></g></g></mask></defs>
<g id="rs">
<g filter="url(#rblur)">
<g mask="url(#hmask)"><g transform="translate(824.72 512.29) rotate(13.5) scale(1 0.5079)"><circle cx="0" cy="0" r="400.0" fill="url(#rgH)" /></g><g mask="url(#dmask)"><g transform="translate(824.72 512.29) rotate(13.5) scale(1 0.5079)"><circle cx="0" cy="0" r="400.0" fill="url(#rgHD)" /></g></g></g>
<g transform="translate(824.72 512.29) rotate(13.5) scale(1 0.5079)"><circle cx="0" cy="0" r="400.0" fill="url(#rgL)" /></g>
<g mask="url(#dmask)"><g transform="translate(824.72 512.29) rotate(13.5) scale(1 0.5079)"><circle cx="0" cy="0" r="400.0" fill="url(#rgD)" /></g></g>
<g mask="url(#dmask1)"><g transform="translate(824.72 512.29) rotate(13.5) scale(1 0.5079)"><circle cx="0" cy="0" r="400.0" fill="url(#rgC)" /></g></g>
<g mask="url(#bmask)"><g transform="translate(824.72 512.29) rotate(13.5) scale(1 0.5079)"><circle cx="0" cy="0" r="400.0" fill="url(#rgB)" /></g></g>
</g>
<g clip-path="url(#shclip)"><g transform="translate(824.72 512.29) rotate(13.5) scale(1 0.5079)"><circle cx="0" cy="0" r="400.0" fill="url(#rgS)" /></g></g>
</g>
<g clip-path="url(#puclip)"><g transform="translate(824.72 512.29) rotate(13.5) scale(1 0.5079)"><circle cx="0" cy="0" r="400.0" fill="url(#rgP)" /></g></g>
<g clip-path="url(#pclip)"><rect x="655.5" y="315.9" width="345.0" height="345.0" fill="#484848"/><g filter="url(#pblur)"><path transform="rotate(3.4 828.0 490.0)" d="M650.0 490.0A178.0 172.0 0 0 1 1006.0 490.0A178.0 172.0 0 0 1 650.0 490.0Z" fill="#494949"/><path transform="rotate(3.4 828.0 489.7)" d="M652.0 489.7A176.0 170.0 0 0 1 1004.0 489.7A176.0 169.9 0 0 1 652.0 489.7Z" fill="#4a4a4a"/><path transform="rotate(3.4 828.0 489.3)" d="M653.9 489.3A174.1 167.9 0 0 1 1002.1 489.3A174.1 167.8 0 0 1 653.9 489.3Z" fill="#4b4b4b"/><path transform="rotate(3.4 828.0 489.0)" d="M655.9 489.0A172.1 165.9 0 0 1 1000.1 489.0A172.1 165.7 0 0 1 655.9 489.0Z" fill="#4b4b4b"/><path transform="rotate(3.4 828.0 488.7)" d="M657.9 488.7A170.1 163.8 0 0 1 998.1 488.7A170.1 163.6 0 0 1 657.9 488.7Z" fill="#4c4c4c"/><path transform="rotate(3.4 828.0 488.4)" d="M659.9 488.4A168.1 161.8 0 0 1 996.1 488.4A168.1 161.5 0 0 1 659.9 488.4Z" fill="#4d4d4d"/><path transform="rotate(3.4 828.0 488.0)" d="M661.8 488.0A166.2 159.8 0 0 1 994.2 488.0A166.2 159.4 0 0 1 661.8 488.0Z" fill="#4e4e4e"/><path transform="rotate(3.4 828.0 487.7)" d="M663.8 487.7A164.2 157.7 0 0 1 992.2 487.7A164.2 157.3 0 0 1 663.8 487.7Z" fill="#4e4e4e"/><path transform="rotate(3.4 828.1 487.1)" d="M665.6 487.1A162.4 156.0 0 0 1 990.5 487.1A162.4 155.4 0 0 1 665.6 487.1Z" fill="#4f4f4f"/><path transform="rotate(3.4 828.3 486.2)" d="M667.2 486.2A161.1 154.9 0 0 1 989.4 486.2A161.1 153.9 0 0 1 667.2 486.2Z" fill="#505050"/><path transform="rotate(3.4 828.5 485.2)" d="M668.8 485.2A159.7 153.7 0 0 1 988.2 485.2A159.7 152.4 0 0 1 668.8 485.2Z" fill="#515151"/><path transform="rotate(3.4 828.7 484.3)" d="M670.4 484.3A158.3 152.6 0 0 1 987.0 484.3A158.3 150.9 0 0 1 670.4 484.3Z" fill="#595959"/><path transform="rotate(3.4 828.9 483.4)" d="M672.0 483.4A156.9 151.4 0 0 1 985.8 483.4A156.9 149.4 0 0 1 672.0 483.4Z" fill="#676767"/><path transform="rotate(3.4 829.1 482.4)" d="M673.6 482.4A155.6 150.3 0 0 1 984.7 482.4A155.6 147.9 0 0 1 673.6 482.4Z" fill="#747474"/><path transform="rotate(3.4 829.3 481.5)" d="M675.2 481.5A154.2 149.1 0 0 1 983.5 481.5A154.2 146.3 0 0 1 675.2 481.5Z" fill="#838383"/><path transform="rotate(3.4 829.5 480.5)" d="M676.7 480.5A152.8 148.0 0 0 1 982.3 480.5A152.8 144.8 0 0 1 676.7 480.5Z" fill="#8f8f8f"/><path transform="rotate(3.4 829.7 479.6)" d="M678.3 479.6A151.4 146.8 0 0 1 981.2 479.6A151.4 143.3 0 0 1 678.3 479.6Z" fill="#8b8b8b"/><path transform="rotate(3.4 829.9 478.7)" d="M679.9 478.7A150.0 145.6 0 0 1 980.0 478.7A150.0 141.8 0 0 1 679.9 478.7Z" fill="#888888"/><path transform="rotate(3.4 830.2 477.7)" d="M681.5 477.7A148.7 144.5 0 0 1 978.8 477.7A148.7 140.3 0 0 1 681.5 477.7Z" fill="#808080"/><path transform="rotate(3.4 830.4 476.8)" d="M683.1 476.8A147.3 143.3 0 0 1 977.6 476.8A147.3 138.8 0 0 1 683.1 476.8Z" fill="#777777"/><path transform="rotate(3.4 830.6 476.2)" d="M684.2 476.2A146.3 142.5 0 0 1 976.9 476.2A146.3 136.7 0 0 1 684.2 476.2Z" fill="#6f6f6f"/><path transform="rotate(3.4 830.7 475.6)" d="M685.3 475.6A145.4 141.8 0 0 1 976.2 475.6A145.4 134.6 0 0 1 685.3 475.6Z" fill="#696969"/><path transform="rotate(3.4 830.9 475.0)" d="M686.4 475.0A144.6 141.1 0 0 1 975.5 475.0A144.6 132.4 0 0 1 686.4 475.0Z" fill="#646464"/><path transform="rotate(3.4 831.1 474.5)" d="M687.4 474.5A143.7 140.3 0 0 1 974.9 474.5A143.7 130.2 0 0 1 687.4 474.5Z" fill="#616161"/><path transform="rotate(3.4 831.3 473.9)" d="M688.5 473.9A142.9 139.6 0 0 1 974.2 473.9A142.9 128.0 0 0 1 688.5 473.9Z" fill="#5f5f5f"/><path transform="rotate(3.4 831.5 473.4)" d="M689.5 473.4A142.0 138.9 0 0 1 973.5 473.4A142.0 125.8 0 0 1 689.5 473.4Z" fill="#626262"/><path transform="rotate(3.4 831.7 472.8)" d="M690.6 472.8A141.1 138.2 0 0 1 972.8 472.8A141.1 123.6 0 0 1 690.6 472.8Z" fill="#727272"/><path transform="rotate(3.4 831.9 472.3)" d="M691.6 472.3A140.3 137.4 0 0 1 972.2 472.3A140.3 121.4 0 0 1 691.6 472.3Z" fill="#818181"/><path transform="rotate(3.4 832.1 471.7)" d="M692.7 471.7A139.4 136.7 0 0 1 971.5 471.7A139.4 119.2 0 0 1 692.7 471.7Z" fill="#929292"/><path transform="rotate(3.4 832.5 470.7)" d="M693.9 470.7A138.6 135.5 0 0 1 971.1 470.7A138.6 117.8 0 0 1 693.9 470.7Z" fill="#a3a3a3"/><path transform="rotate(3.4 832.8 469.6)" d="M695.0 469.6A137.8 134.4 0 0 1 970.6 469.6A137.8 116.4 0 0 1 695.0 469.6Z" fill="#b2b2b2"/><path transform="rotate(3.4 833.2 468.6)" d="M696.2 468.6A137.0 133.2 0 0 1 970.2 468.6A137.0 114.9 0 0 1 696.2 468.6Z" fill="#bfbfbf"/><path transform="rotate(3.4 833.6 467.6)" d="M697.4 467.6A136.2 132.0 0 0 1 969.8 467.6A136.2 113.5 0 0 1 697.4 467.6Z" fill="#cbcbcb"/><path transform="rotate(3.4 833.9 466.5)" d="M698.6 466.5A135.4 130.9 0 0 1 969.3 466.5A135.4 112.1 0 0 1 698.6 466.5Z" fill="#d2d2d2"/><path transform="rotate(3.4 834.3 465.5)" d="M699.7 465.5A134.6 129.7 0 0 1 968.9 465.5A134.6 110.7 0 0 1 699.7 465.5Z" fill="#d4d4d4"/><path transform="rotate(3.4 834.7 464.5)" d="M700.9 464.5A133.8 128.5 0 0 1 968.5 464.5A133.8 109.3 0 0 1 700.9 464.5Z" fill="#d6d6d6"/><path transform="rotate(3.4 835.0 463.4)" d="M702.1 463.4A133.0 127.4 0 0 1 968.0 463.4A133.0 107.8 0 0 1 702.1 463.4Z" fill="#d9d9d9"/><path transform="rotate(3.4 835.4 462.4)" d="M703.2 462.4A132.2 126.2 0 0 1 967.6 462.4A132.2 106.4 0 0 1 703.2 462.4Z" fill="#dadada"/><path transform="rotate(3.4 835.8 461.4)" d="M704.4 461.4A131.4 125.1 0 0 1 967.2 461.4A131.4 105.0 0 0 1 704.4 461.4Z" fill="#d8d8d8"/><path transform="rotate(3.4 836.2 460.3)" d="M705.6 460.3A130.6 123.9 0 0 1 966.7 460.3A130.6 103.6 0 0 1 705.6 460.3Z" fill="#d3d3d3"/><path transform="rotate(3.4 836.5 459.3)" d="M706.8 459.3A129.8 122.7 0 0 1 966.3 459.3A129.8 102.1 0 0 1 706.8 459.3Z" fill="#c5c5c5"/><path transform="rotate(3.4 836.9 458.3)" d="M707.9 458.3A129.0 121.6 0 0 1 965.9 458.3A129.0 100.7 0 0 1 707.9 458.3Z" fill="#b8b8b8"/><path transform="rotate(3.4 837.3 457.2)" d="M709.1 457.2A128.2 120.4 0 0 1 965.4 457.2A128.2 99.3 0 0 1 709.1 457.2Z" fill="#a7a7a7"/><path transform="rotate(3.4 837.6 456.2)" d="M710.3 456.2A127.4 119.2 0 0 1 965.0 456.2A127.4 97.9 0 0 1 710.3 456.2Z" fill="#959595"/><path transform="rotate(3.4 837.9 455.5)" d="M711.2 455.5A126.7 118.3 0 0 1 964.5 455.5A126.7 96.1 0 0 1 711.2 455.5Z" fill="#878787"/><path transform="rotate(3.4 838.1 454.9)" d="M712.1 454.9A126.0 117.5 0 0 1 964.0 454.9A126.0 94.3 0 0 1 712.1 454.9Z" fill="#7a7a7a"/><path transform="rotate(3.4 838.3 454.4)" d="M713.0 454.4A125.3 116.7 0 0 1 963.6 454.4A125.3 92.4 0 0 1 713.0 454.4Z" fill="#767676"/><path transform="rotate(3.4 838.5 453.8)" d="M713.9 453.8A124.6 115.8 0 0 1 963.1 453.8A124.6 90.6 0 0 1 713.9 453.8Z" fill="#767676"/><path transform="rotate(3.4 838.7 453.2)" d="M714.8 453.2A123.9 115.0 0 0 1 962.6 453.2A123.9 88.7 0 0 1 714.8 453.2Z" fill="#757575"/><path transform="rotate(3.4 838.9 452.6)" d="M715.7 452.6A123.2 114.1 0 0 1 962.1 452.6A123.2 86.9 0 0 1 715.7 452.6Z" fill="#747474"/><path transform="rotate(3.4 839.1 452.1)" d="M716.4 452.1A122.7 113.5 0 0 1 961.8 452.1A122.7 85.4 0 0 1 716.4 452.1Z" fill="#7d7d7d"/><path transform="rotate(3.4 839.3 451.7)" d="M717.2 451.7A122.1 112.8 0 0 1 961.4 451.7A122.1 83.9 0 0 1 717.2 451.7Z" fill="#8a8a8a"/><path transform="rotate(3.4 839.4 451.2)" d="M717.9 451.2A121.5 112.1 0 0 1 961.0 451.2A121.5 82.4 0 0 1 717.9 451.2Z" fill="#9b9b9b"/><path transform="rotate(3.4 839.6 450.7)" d="M718.9 450.7A120.8 111.4 0 0 1 960.4 450.7A120.8 80.9 0 0 1 718.9 450.7Z" fill="#afafaf"/><path transform="rotate(3.4 839.8 450.2)" d="M719.8 450.2A120.0 110.7 0 0 1 959.8 450.2A120.0 79.4 0 0 1 719.8 450.2Z" fill="#c0c0c0"/><path transform="rotate(3.4 840.0 449.7)" d="M720.7 449.7A119.3 110.1 0 0 1 959.3 449.7A119.3 77.9 0 0 1 720.7 449.7Z" fill="#cacaca"/><path transform="rotate(3.4 840.2 449.2)" d="M721.6 449.2A118.6 109.4 0 0 1 958.7 449.2A118.6 76.4 0 0 1 721.6 449.2Z" fill="#d4d4d4"/><path transform="rotate(3.4 840.3 448.7)" d="M722.5 448.7A117.8 108.7 0 0 1 958.2 448.7A117.8 74.9 0 0 1 722.5 448.7Z" fill="#dedede"/><path transform="rotate(3.4 840.5 448.2)" d="M723.4 448.2A117.1 108.0 0 0 1 957.6 448.2A117.1 73.4 0 0 1 723.4 448.2Z" fill="#dbdbdb"/><path transform="rotate(3.4 840.7 447.7)" d="M724.4 447.7A116.3 107.3 0 0 1 957.0 447.7A116.3 71.9 0 0 1 724.4 447.7Z" fill="#d4d4d4"/><path transform="rotate(3.4 840.9 447.3)" d="M725.3 447.3A115.6 106.6 0 0 1 956.5 447.3A115.6 70.4 0 0 1 725.3 447.3Z" fill="#c5c5c5"/><path transform="rotate(3.4 841.1 446.8)" d="M726.2 446.8A114.9 105.9 0 0 1 955.9 446.8A114.9 68.9 0 0 1 726.2 446.8Z" fill="#b3b3b3"/><path transform="rotate(3.4 841.2 446.3)" d="M727.1 446.3A114.1 105.3 0 0 1 955.4 446.3A114.1 67.4 0 0 1 727.1 446.3Z" fill="#a3a3a3"/><path transform="rotate(3.4 841.3 446.1)" d="M727.8 446.1A113.5 104.7 0 0 1 954.8 446.1A113.5 65.6 0 0 1 727.8 446.1Z" fill="#9c9c9c"/><path transform="rotate(3.4 841.4 445.8)" d="M728.6 445.8A112.8 104.1 0 0 1 954.2 445.8A112.8 63.8 0 0 1 728.6 445.8Z" fill="#959595"/><path transform="rotate(3.4 841.5 445.5)" d="M729.3 445.5A112.2 103.6 0 0 1 953.6 445.5A112.2 62.1 0 0 1 729.3 445.5Z" fill="#8e8e8e"/><path transform="rotate(3.4 841.6 445.2)" d="M730.1 445.2A111.5 103.0 0 0 1 953.1 445.2A111.5 60.3 0 0 1 730.1 445.2Z" fill="#919191"/><path transform="rotate(3.4 841.6 445.0)" d="M730.8 445.0A110.8 102.5 0 0 1 952.5 445.0A110.8 58.6 0 0 1 730.8 445.0Z" fill="#969696"/><path transform="rotate(3.4 841.7 444.7)" d="M731.5 444.7A110.2 101.9 0 0 1 951.9 444.7A110.2 56.8 0 0 1 731.5 444.7Z" fill="#a4a4a4"/><path transform="rotate(3.4 841.8 444.5)" d="M732.3 444.5A109.5 101.4 0 0 1 951.3 444.5A109.5 55.0 0 0 1 732.3 444.5Z" fill="#b4b4b4"/><path transform="rotate(3.4 841.9 444.3)" d="M733.2 444.3A108.7 100.9 0 0 1 950.6 444.3A108.7 53.2 0 0 1 733.2 444.3Z" fill="#c3c3c3"/><path transform="rotate(3.4 842.0 444.1)" d="M734.0 444.1A108.0 100.4 0 0 1 949.9 444.1A108.0 51.5 0 0 1 734.0 444.1Z" fill="#d1d1d1"/><path transform="rotate(3.4 842.0 443.9)" d="M734.8 443.9A107.2 99.9 0 0 1 949.2 443.9A107.2 49.6 0 0 1 734.8 443.9Z" fill="#e0e0e0"/><path transform="rotate(3.4 842.1 443.7)" d="M735.7 443.7A106.4 99.4 0 0 1 948.6 443.7A106.4 47.8 0 0 1 735.7 443.7Z" fill="#d2d2d2"/><path transform="rotate(3.4 842.2 443.5)" d="M736.5 443.5A105.7 98.9 0 0 1 947.9 443.5A105.7 46.0 0 0 1 736.5 443.5Z" fill="#bbbbbb"/><path transform="rotate(3.4 842.3 443.3)" d="M737.4 443.3A104.9 98.4 0 0 1 947.2 443.3A104.9 44.2 0 0 1 737.4 443.3Z" fill="#a9a9a9"/><path transform="rotate(3.4 842.2 442.1)" d="M738.6 442.1A103.6 97.0 0 0 1 945.8 442.1A103.6 43.5 0 0 1 738.6 442.1Z" fill="#999999"/><path transform="rotate(3.4 842.1 440.6)" d="M740.0 440.6A102.1 95.3 0 0 1 944.2 440.6A102.1 43.0 0 0 1 740.0 440.6Z" fill="#8c8c8c"/><path transform="rotate(3.4 842.1 439.0)" d="M741.4 439.0A100.6 93.6 0 0 1 942.7 439.0A100.6 42.5 0 0 1 741.4 439.0Z" fill="#898989"/><path transform="rotate(3.4 842.0 437.5)" d="M742.9 437.5A99.1 91.9 0 0 1 941.1 437.5A99.1 42.1 0 0 1 742.9 437.5Z" fill="#868686"/><path transform="rotate(3.4 841.9 436.0)" d="M744.2 436.0A97.6 90.2 0 0 1 939.5 436.0A97.6 41.6 0 0 1 744.2 436.0Z" fill="#838383"/><path transform="rotate(3.4 841.8 434.4)" d="M745.6 434.4A96.1 88.5 0 0 1 937.9 434.4A96.1 41.2 0 0 1 745.6 434.4Z" fill="#808080"/><path transform="rotate(3.4 841.7 432.9)" d="M747.0 432.9A94.7 86.8 0 0 1 936.4 432.9A94.7 40.7 0 0 1 747.0 432.9Z" fill="#7e7e7e"/><path transform="rotate(3.4 841.6 431.3)" d="M748.5 431.3A93.2 85.1 0 0 1 934.8 431.3A93.2 40.3 0 0 1 748.5 431.3Z" fill="#7d7d7d"/><path transform="rotate(3.4 841.5 429.8)" d="M749.8 429.8A91.7 83.4 0 0 1 933.2 429.8A91.7 39.8 0 0 1 749.8 429.8Z" fill="#7b7b7b"/><path transform="rotate(3.4 841.4 428.2)" d="M751.2 428.2A90.2 81.6 0 0 1 931.6 428.2A90.2 39.4 0 0 1 751.2 428.2Z" fill="#7a7a7a"/><path transform="rotate(3.4 841.4 426.7)" d="M752.6 426.7A88.7 79.9 0 0 1 930.1 426.7A88.7 38.9 0 0 1 752.6 426.7Z" fill="#797979"/><path transform="rotate(3.4 841.3 425.1)" d="M754.0 425.1A87.2 78.2 0 0 1 928.5 425.1A87.2 38.5 0 0 1 754.0 425.1Z" fill="#777777"/><path transform="rotate(3.4 841.2 423.6)" d="M755.4 423.6A85.7 76.5 0 0 1 926.9 423.6A85.7 38.0 0 0 1 755.4 423.6Z" fill="#767676"/><path transform="rotate(3.4 841.1 422.0)" d="M756.9 422.0A84.2 74.8 0 0 1 925.3 422.0A84.2 37.5 0 0 1 756.9 422.0Z" fill="#757575"/><path transform="rotate(3.4 841.0 420.5)" d="M758.2 420.5A82.8 73.1 0 0 1 923.8 420.5A82.8 37.1 0 0 1 758.2 420.5Z" fill="#737373"/><path transform="rotate(3.4 840.9 418.9)" d="M759.6 418.9A81.3 71.4 0 0 1 922.2 418.9A81.3 36.6 0 0 1 759.6 418.9Z" fill="#727272"/><path transform="rotate(3.4 840.8 417.4)" d="M761.0 417.4A79.8 69.7 0 0 1 920.6 417.4A79.8 36.2 0 0 1 761.0 417.4Z" fill="#717171"/><path transform="rotate(3.4 840.7 415.8)" d="M762.5 415.8A78.3 68.0 0 0 1 919.0 415.8A78.3 35.7 0 0 1 762.5 415.8Z" fill="#6f6f6f"/><path transform="rotate(3.4 840.7 414.3)" d="M763.8 414.3A76.8 66.3 0 0 1 917.5 414.3A76.8 35.3 0 0 1 763.8 414.3Z" fill="#6e6e6e"/><path transform="rotate(3.4 840.6 412.7)" d="M765.2 412.7A75.3 64.6 0 0 1 915.9 412.7A75.3 34.8 0 0 1 765.2 412.7Z" fill="#6d6d6d"/><path transform="rotate(3.4 840.5 411.2)" d="M766.6 411.2A73.8 62.9 0 0 1 914.3 411.2A73.8 34.4 0 0 1 766.6 411.2Z" fill="#6c6c6c"/><path transform="rotate(3.4 840.4 409.6)" d="M768.0 409.6A72.3 61.1 0 0 1 912.8 409.6A72.3 33.9 0 0 1 768.0 409.6Z" fill="#6b6b6b"/><path transform="rotate(3.4 840.3 408.1)" d="M769.5 408.1A70.9 59.4 0 0 1 911.2 408.1A70.9 33.4 0 0 1 769.5 408.1Z" fill="#6a6a6a"/><path transform="rotate(3.4 840.2 406.6)" d="M770.8 406.6A69.4 57.7 0 0 1 909.6 406.6A69.4 33.0 0 0 1 770.8 406.6Z" fill="#696969"/><path transform="rotate(3.4 840.1 405.0)" d="M772.2 405.0A67.9 56.0 0 0 1 908.0 405.0A67.9 32.5 0 0 1 772.2 405.0Z" fill="#686868"/><path transform="rotate(3.4 840.1 403.5)" d="M773.6 403.5A66.4 54.3 0 0 1 906.5 403.5A66.4 32.1 0 0 1 773.6 403.5Z" fill="#676767"/><path transform="rotate(3.4 840.0 401.9)" d="M775.1 401.9A64.9 52.6 0 0 1 904.9 401.9A64.9 31.6 0 0 1 775.1 401.9Z" fill="#666666"/><path transform="rotate(3.4 839.9 400.4)" d="M776.4 400.4A63.4 50.9 0 0 1 903.3 400.4A63.4 31.2 0 0 1 776.4 400.4Z" fill="#656565"/><path transform="rotate(3.4 839.8 398.8)" d="M777.9 398.8A61.9 49.2 0 0 1 901.7 398.8A61.9 30.7 0 0 1 777.9 398.8Z" fill="#656565"/><path transform="rotate(3.4 839.7 397.3)" d="M779.2 397.3A60.5 47.5 0 0 1 900.2 397.3A60.5 30.3 0 0 1 779.2 397.3Z" fill="#646464"/><path transform="rotate(3.4 839.6 395.7)" d="M780.6 395.7A59.0 45.8 0 0 1 898.6 395.7A59.0 29.8 0 0 1 780.6 395.7Z" fill="#656565"/><path transform="rotate(3.4 839.5 394.2)" d="M782.0 394.2A57.5 44.1 0 0 1 897.0 394.2A57.5 29.3 0 0 1 782.0 394.2Z" fill="#666666"/><path transform="rotate(3.4 839.4 392.6)" d="M783.5 392.6A56.0 42.4 0 0 1 895.4 392.6A56.0 28.9 0 0 1 783.5 392.6Z" fill="#666666"/><path transform="rotate(3.4 839.4 391.1)" d="M784.8 391.1A54.5 40.7 0 0 1 893.9 391.1A54.5 28.4 0 0 1 784.8 391.1Z" fill="#676767"/><path transform="rotate(3.4 839.3 389.5)" d="M786.2 389.5A53.0 38.9 0 0 1 892.3 389.5A53.0 28.0 0 0 1 786.2 389.5Z" fill="#686868"/><path transform="rotate(3.4 839.2 388.0)" d="M787.6 388.0A51.5 37.2 0 0 1 890.7 388.0A51.5 27.5 0 0 1 787.6 388.0Z" fill="#686868"/><path transform="rotate(3.4 839.1 386.4)" d="M789.1 386.4A50.0 35.5 0 0 1 889.1 386.4A50.0 27.1 0 0 1 789.1 386.4Z" fill="#696969"/><path transform="rotate(3.4 839.0 384.9)" d="M790.4 384.9A48.6 33.8 0 0 1 887.6 384.9A48.6 26.6 0 0 1 790.4 384.9Z" fill="#6a6a6a"/><path transform="rotate(3.4 838.9 383.3)" d="M791.9 383.3A47.1 32.1 0 0 1 886.0 383.3A47.1 26.2 0 0 1 791.9 383.3Z" fill="#6a6a6a"/><path transform="rotate(3.4 838.8 381.8)" d="M793.2 381.8A45.6 30.4 0 0 1 884.4 381.8A45.6 25.7 0 0 1 793.2 381.8Z" fill="#6b6b6b"/><path transform="rotate(3.4 838.7 380.3)" d="M794.6 380.3A44.1 28.7 0 0 1 882.8 380.3A44.1 25.3 0 0 1 794.6 380.3Z" fill="#6c6c6c"/><path transform="rotate(3.4 838.7 378.7)" d="M796.0 378.7A42.6 27.0 0 0 1 881.3 378.7A42.6 24.8 0 0 1 796.0 378.7Z" fill="#6d6d6d"/><path transform="rotate(3.4 838.6 377.2)" d="M797.5 377.2A41.1 25.3 0 0 1 879.7 377.2A41.1 24.3 0 0 1 797.5 377.2Z" fill="#6f6f6f"/><path transform="rotate(3.4 838.5 375.9)" d="M799.2 375.9A39.3 23.6 0 0 1 877.8 375.9A39.3 23.6 0 0 1 799.2 375.9Z" fill="#727272"/><path transform="rotate(3.4 838.5 375.6)" d="M802.0 375.6A36.4 21.9 0 0 1 874.9 375.6A36.4 21.9 0 0 1 802.0 375.6Z" fill="#757575"/><path transform="rotate(3.4 838.4 375.3)" d="M804.9 375.3A33.5 20.2 0 0 1 872.0 375.3A33.5 20.2 0 0 1 804.9 375.3Z" fill="#787878"/><path transform="rotate(3.4 838.4 375.1)" d="M807.7 375.1A30.7 18.4 0 0 1 869.0 375.1A30.7 18.4 0 0 1 807.7 375.1Z" fill="#7a7a7a"/><path transform="rotate(3.4 838.3 374.8)" d="M810.6 374.8A27.8 16.7 0 0 1 866.1 374.8A27.8 16.7 0 0 1 810.6 374.8Z" fill="#7f7f7f"/><path transform="rotate(3.4 838.3 374.5)" d="M813.4 374.5A24.9 15.0 0 0 1 863.2 374.5A24.9 15.0 0 0 1 813.4 374.5Z" fill="#8c8c8c"/><path transform="rotate(3.4 838.3 374.2)" d="M816.2 374.2A22.0 13.3 0 0 1 860.3 374.2A22.0 13.3 0 0 1 816.2 374.2Z" fill="#939393"/><path transform="rotate(3.4 838.2 373.9)" d="M819.1 373.9A19.2 11.6 0 0 1 857.4 373.9A19.2 11.6 0 0 1 819.1 373.9Z" fill="#8c8c8c"/><path transform="rotate(3.4 838.2 373.6)" d="M821.9 373.6A16.3 9.9 0 0 1 854.5 373.6A16.3 9.9 0 0 1 821.9 373.6Z" fill="#8a8a8a"/><path transform="rotate(3.4 838.2 373.3)" d="M824.7 373.3A13.4 8.2 0 0 1 851.6 373.3A13.4 8.2 0 0 1 824.7 373.3Z" fill="#959595"/><path transform="rotate(3.4 838.1 373.0)" d="M827.6 373.0A10.6 6.5 0 0 1 848.7 373.0A10.6 6.5 0 0 1 827.6 373.0Z" fill="#9a9a9a"/><path transform="rotate(3.4 838.1 372.7)" d="M830.4 372.7A7.7 4.8 0 0 1 845.8 372.7A7.7 4.8 0 0 1 830.4 372.7Z" fill="#8e8e8e"/><path transform="rotate(3.4 838.1 372.4)" d="M833.2 372.4A4.8 3.1 0 0 1 842.9 372.4A4.8 3.1 0 0 1 833.2 372.4Z" fill="#888888"/><path transform="rotate(3.4 838.0 372.1)" d="M836.1 372.1A1.9 1.4 0 0 1 840.0 372.1A1.9 1.4 0 0 1 836.1 372.1Z" fill="#949494"/></g><rect x="655.5" y="315.9" width="345.0" height="345.0" fill="url(#plit)"/><rect x="655.5" y="315.9" width="345.0" height="345.0" fill="url(#plimb)"/><rect x="655.5" y="315.9" width="345.0" height="345.0" fill="url(#pwhite)"/></g>
<g clip-path="url(#pclip2)"><g mask="url(#fmask)"><use href="#rs"/></g></g>
<g fill="none" stroke="#3b1a66" stroke-width="1.7" stroke-linecap="round">
<path d="M465 344.4 L649.5 460.4"/>
<path d="M505.8 362.3 L536.8 344.7" stroke-width="1.5"/>
<path d="M542 384.4 L566.5 370" stroke-width="1.5"/>
<path d="M598.5 417.6 L616 406" stroke-width="1.3"/>
<path d="M608 425.8 Q613 417.5 625 413" stroke-width="1.3"/>
<path d="M476 564 L509.5 544.5 M502.8 543.8 L509.5 544.5 L508.3 551.2" stroke-width="1.05"/>
<path d="M562.3 624 Q581 610 597.2 592.2 M590 593 L597.2 592.2 L597.4 600.4" stroke-width="1.05"/>
</g>
<text x="483.6" y="335.2" font-size="14" textLength="10.6" lengthAdjust="spacingAndGlyphs" font-family="Liberation Sans, Arial, sans-serif" fill="#41226e" transform="rotate(-6 483.6 335.2)" stroke="#3a1b66" stroke-width="0.4">G</text>
<text x="504.6" y="349.5" font-size="15" textLength="7.4" lengthAdjust="spacingAndGlyphs" font-family="Liberation Sans, Arial, sans-serif" fill="#41226e" transform="rotate(-4 504.6 349.5)" stroke="#3a1b66" stroke-width="0.4">F</text>
<text x="535.2" y="373.4" font-size="18" textLength="9.4" lengthAdjust="spacingAndGlyphs" font-family="Liberation Sans, Arial, sans-serif" fill="#41226e" transform="rotate(6 535.2 373.4)" stroke="#3a1b66" stroke-width="0.4">A</text>
<text x="578.4" y="399.2" font-size="18" textLength="10" lengthAdjust="spacingAndGlyphs" font-family="Liberation Sans, Arial, sans-serif" fill="#41226e" transform="rotate(6 578.4 399.2)" stroke="#3a1b66" stroke-width="0.4">B</text>
<text x="617.4" y="430.8" font-size="15.6" textLength="9" lengthAdjust="spacingAndGlyphs" font-family="Liberation Sans, Arial, sans-serif" fill="#41226e" transform="rotate(8 617.4 430.8)" stroke="#3a1b66" stroke-width="0.4">C</text>
<text x="638.2" y="443.8" font-size="16.6" textLength="9.2" lengthAdjust="spacingAndGlyphs" font-family="Liberation Sans, Arial, sans-serif" fill="#41226e" transform="rotate(8 638.2 443.8)" stroke="#3a1b66" stroke-width="0.4">D</text>
<text x="407.4" y="572.8" font-size="15.5" textLength="68" lengthAdjust="spacingAndGlyphs" font-family="Liberation Sans, Arial, sans-serif" fill="#41226e" >Enke division</text>
<text x="479.2" y="637.2" font-size="15.5" textLength="83.6" lengthAdjust="spacingAndGlyphs" font-family="Liberation Sans, Arial, sans-serif" fill="#41226e" >Cassini division</text>
</svg>
<span class="t" style="left:61.9px;top:21.0px;font-size:14.4px;font-weight:400;color:#242424;letter-spacing:-0.379px;">Rings of Saturn</span>
<span class="t" style="left:437.4px;top:21.0px;font-size:13.2px;font-weight:400;color:#616161;letter-spacing:-0.319px;">Search</span>
<span class="t" style="left:13.2px;top:62.0px;font-size:13.8px;font-weight:400;color:#5c5c5c;letter-spacing:-0.578px;">File</span>
<span class="t" style="left:60.4px;top:62.0px;font-size:13.8px;font-weight:400;color:#5c5c5c;letter-spacing:0.029px;">Home</span>
<span class="t" style="left:123.3px;top:62.0px;font-size:13.8px;font-weight:400;color:#242424;letter-spacing:0.317px;-webkit-text-stroke:0.45px currentColor;">Insert</span>
<span class="t" style="left:185.4px;top:62.0px;font-size:13.8px;font-weight:400;color:#5c5c5c;letter-spacing:-0.334px;">Draw</span>
<span class="t" style="left:243.2px;top:62.0px;font-size:13.8px;font-weight:400;color:#5c5c5c;letter-spacing:0.077px;">History</span>
<span class="t" style="left:313.4px;top:62.0px;font-size:13.8px;font-weight:400;color:#5c5c5c;letter-spacing:-0.610px;">Review</span>
<span class="t" style="left:382.0px;top:62.0px;font-size:13.8px;font-weight:400;color:#5c5c5c;letter-spacing:-0.219px;">View</span>
<span class="t" style="left:438.0px;top:62.0px;font-size:13.8px;font-weight:400;color:#5c5c5c;letter-spacing:0.003px;">Help</span>
<span class="t" style="left:1296.0px;top:62.0px;font-size:11.6px;font-weight:400;color:#ffffff;letter-spacing:-0.484px;-webkit-text-stroke:0.45px currentColor;">Share</span>
<span class="t" style="left:116.0px;top:102.0px;font-size:12.2px;font-weight:400;color:#424242;letter-spacing:-0.258px;">Cailbri</span>
<span class="t" style="left:220.2px;top:102.0px;font-size:12.2px;font-weight:400;color:#424242;letter-spacing:-0.256px;">11</span>
<span class="t" style="left:269.4px;top:98.0px;font-size:18.4px;font-weight:700;color:#333333;letter-spacing:0.000px;">B</span>
<span class="t" style="left:308.7px;top:96.0px;font-size:20px;font-weight:400;color:#333333;letter-spacing:0.000px;font-family:'Liberation Serif',serif;font-style:italic;">I</span>
<span class="t" style="left:341.4px;top:98.0px;font-size:18px;font-weight:400;color:#3a3a3a;letter-spacing:0.000px;">U</span>
<span class="t" style="left:374.6px;top:99.0px;font-size:16.4px;font-weight:400;color:#4f4f4f;letter-spacing:0.766px;">ab</span>
<span class="t" style="left:828.6px;top:101.0px;font-size:13.2px;font-weight:400;color:#333;letter-spacing:-0.304px;">Styles</span>
<span class="t" style="left:933.6px;top:101.0px;font-size:13.2px;font-weight:400;color:#333;letter-spacing:-0.184px;">Email Page</span>
<span class="t" style="left:1045.6px;top:101.0px;font-size:13.2px;font-weight:400;color:#333;letter-spacing:0.379px;">Meeting Details</span>
<span class="t" style="left:1188.3px;top:101.0px;font-size:13.2px;font-weight:400;color:#333;letter-spacing:0.540px;">Copilot</span>
<span class="t" style="left:1213.6px;top:140.0px;font-size:12px;font-weight:400;color:#4a4a4a;letter-spacing:-0.156px;">Search notebooks</span>
<span class="t" style="left:53.3px;top:178.0px;font-size:12.5px;font-weight:400;color:#242424;letter-spacing:0.104px;-webkit-text-stroke:0.45px currentColor;">My Notebook</span>
<span class="t" style="left:53.3px;top:206.0px;font-size:12.5px;font-weight:400;color:#484848;letter-spacing:-0.198px;">Camping trip</span>
<span class="t" style="left:53.3px;top:234.0px;font-size:12.5px;font-weight:400;color:#484848;letter-spacing:-0.479px;">Movies</span>
<span class="t" style="left:53.3px;top:262.0px;font-size:12.5px;font-weight:400;color:#484848;letter-spacing:-0.817px;">Podcasts</span>
<span class="t" style="left:53.3px;top:290.0px;font-size:12.5px;font-weight:400;color:#242424;letter-spacing:-0.407px;-webkit-text-stroke:0.45px currentColor;">School</span>
<span class="t" style="left:53.3px;top:318.0px;font-size:12.5px;font-weight:400;color:#484848;letter-spacing:-0.185px;">Hosting people</span>
<span class="t" style="left:53.3px;top:346.0px;font-size:12.5px;font-weight:400;color:#484848;letter-spacing:-0.267px;">Vacation planning</span>
<span class="t" style="left:54.3px;top:374.0px;font-size:12.5px;font-weight:400;color:#7a2aa8;letter-spacing:-0.389px;">New section</span>
<span class="t" style="left:53.0px;top:418.0px;font-size:12.5px;font-weight:400;color:#242424;letter-spacing:-0.167px;-webkit-text-stroke:0.45px currentColor;">House projects</span>
<span class="t" style="left:53.0px;top:446.0px;font-size:12.5px;font-weight:400;color:#484848;letter-spacing:-0.286px;">Bathroom</span>
<span class="t" style="left:53.0px;top:474.0px;font-size:12.5px;font-weight:400;color:#484848;letter-spacing:-0.408px;">Garden and yard</span>
<span class="t" style="left:53.0px;top:502.0px;font-size:12.5px;font-weight:400;color:#484848;letter-spacing:-0.287px;">Toy room</span>
<span class="t" style="left:54.3px;top:530.0px;font-size:12.5px;font-weight:400;color:#7a2aa8;letter-spacing:-0.379px;">New section</span>
<span class="t" style="left:53.0px;top:574.0px;font-size:12.5px;font-weight:400;color:#242424;letter-spacing:-0.167px;-webkit-text-stroke:0.45px currentColor;">Travel journal</span>
<span class="t" style="left:56.3px;top:814.0px;font-size:12.5px;font-weight:400;color:#484848;letter-spacing:-0.412px;">Quick notes</span>
<span class="t" style="left:243.6px;top:182.0px;font-size:12.5px;font-weight:400;color:#7a2aa8;letter-spacing:-0.390px;">Add page</span>
<span class="t" style="left:227.4px;top:215.0px;font-size:12.5px;font-weight:400;color:#484848;letter-spacing:-0.241px;">Hummingbird wing...</span>
<span class="t" style="left:227.4px;top:243.0px;font-size:12.5px;font-weight:400;color:#484848;letter-spacing:-0.337px;">Weather patterns</span>
<span class="t" style="left:227.4px;top:272.0px;font-size:12.5px;font-weight:400;color:#2a2a2a;letter-spacing:-0.255px;-webkit-text-stroke:0.45px currentColor;">Rings of Saturn</span>
<span class="t" style="left:227.4px;top:299.0px;font-size:12.5px;font-weight:400;color:#484848;letter-spacing:-0.552px;">Physics of</span>
<span class="t" style="left:227.4px;top:383.0px;font-size:12.5px;font-weight:400;color:#484848;letter-spacing:-0.382px;">Accelaration</span>
<span class="t" style="left:421.2px;top:209.0px;font-size:28.5px;font-weight:400;color:#4d4d4d;letter-spacing:0.096px;">Rings of Saturn</span>
<span class="t" style="left:422.7px;top:259.0px;font-size:11.6px;font-weight:400;color:#8c8c8c;letter-spacing:-0.106px;">Wednesday, June 7, 2023</span>
<svg style="left:0;top:0" width="1365" height="842" viewBox="0 0 1365 842"><path d="M172 305.2 H281 L285 282.2 L334 305.2 H358 V364.6 H172 Z" fill="#7030a0"/></svg>
<div class="callout-text">Click a page title to go to
that page</div>

</div>
</body></html>
